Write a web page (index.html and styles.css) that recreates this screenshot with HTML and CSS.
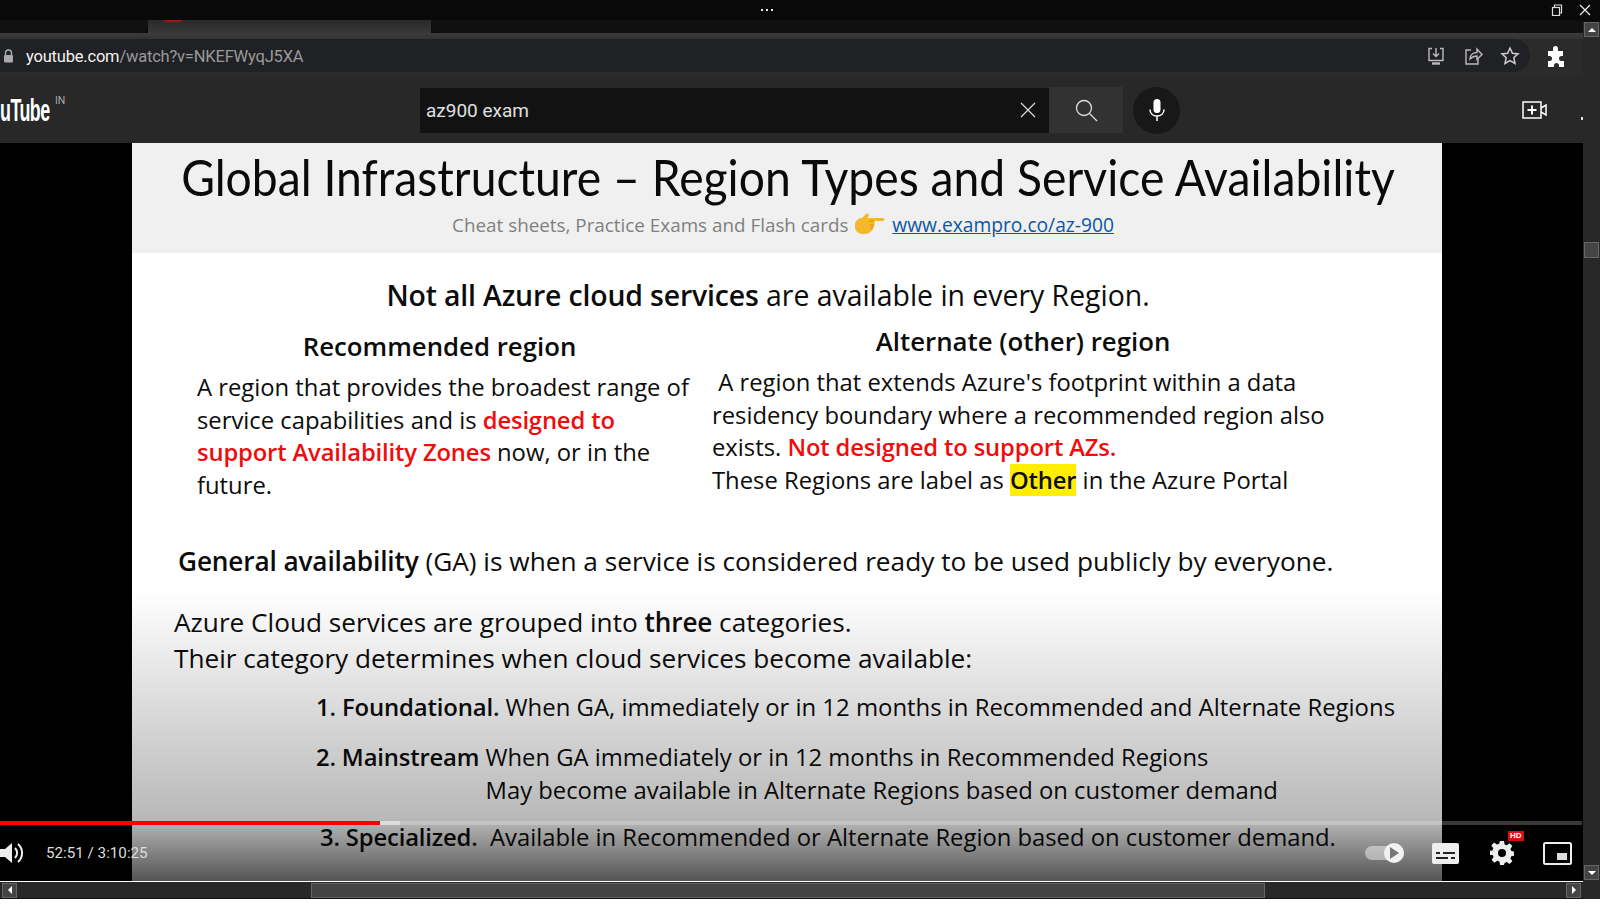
FILE: index.html
```html
<!DOCTYPE html>
<html lang="en">
<head>
    <meta charset="UTF-8">
    <meta name="viewport" content="width=device-width, initial-scale=1.0">
    <title>az900 exam - YouTube</title>
    <link rel="stylesheet" href="styles.css">
</head>
<body>
    <div class="window">
        <div class="main">
            <div class="titlebar">
                <svg class="dots" width="12" height="3" viewBox="0 0 12 3" fill="#eee"><rect width="2" height="2"/><rect x="5" width="2" height="2"/><rect x="10" width="2" height="2"/></svg>
                <div class="win-btns">
                    <svg width="12" height="12" viewBox="0 0 12 12" fill="none" stroke="#ddd" stroke-width="1.2"><rect x="1.5" y="3.5" width="7" height="8"/><path d="M3.5 3V1h7v8H9"/></svg>
                    <svg width="12" height="12" viewBox="0 0 12 12" fill="none" stroke="#eee" stroke-width="1.2"><path d="M1 1l10 10M11 1L1 11"/></svg>
                </div>
            </div>
            <div class="tabstrip">
                <div class="tab-left"></div>
                <div class="tab-active"><span class="favicon"></span></div>
                <div class="tab-right"></div>
            </div>
            <div class="toolbar">
                <div class="omnibox">
                    <svg class="lock" width="11" height="14" viewBox="0 0 11 14"><path d="M2.5 6V4a3 3 0 0 1 6 0v2" fill="none" stroke="#aaa" stroke-width="1.4"/><rect x="1" y="6" width="9" height="7.5" rx="1" fill="#aaa"/></svg>
                    <span class="url"><span class="host">youtube.com</span>/watch?v=NKEFWyqJ5XA</span>
                    <div class="omni-icons">
                        <svg width="20" height="20" viewBox="0 0 20 20" fill="none" stroke="#bbb" stroke-width="1.4"><path d="M6 2.5H3v12h14v-12h-3"/><path d="M10 2v8M7 7.5l3 3 3-3"/><path d="M6 17.5h8" stroke-width="2.4"/></svg>
                        <svg width="20" height="20" viewBox="0 0 20 20" fill="none" stroke="#bbb" stroke-width="1.4"><path d="M8 4H3v14h12v-5"/><path d="M7 13c0-4 3-6.500 7-6.500V3l5 5.500-5 5V10c-3 0-5 1-7 3z"/></svg>
                        <svg width="20" height="20" viewBox="0 0 20 20" fill="none" stroke="#ccc" stroke-width="1.5"><path d="M10 2l2.400 5.300 5.600.6-4.200 3.800 1.200 5.700-5-2.900-5 2.900 1.200-5.700L2 7.900l5.600-.6z"/></svg>
                    </div>
                </div>
                <svg class="puzzle" width="20" height="22" viewBox="0 0 20 22" fill="#fff"><path d="M7 2.500a2.500 2.500 0 0 1 5 0V5h5v5h-1.500a2.500 2.500 0 0 0 0 5H18v6h-5v-1.500a2.500 2.500 0 0 0-5 0V21H2v-6h1.500a2.500 2.500 0 0 0 0-5H2V5h5z"/></svg>
            </div>
            <div class="masthead">
                <div class="logo"><span class="logo-text">uTube</span><span class="logo-country">IN</span></div>
                <div class="search">
                    <div class="search-box">
                        <span class="query">az900 exam</span>
                        <svg width="18" height="18" viewBox="0 0 18 18" fill="none" stroke="#ddd" stroke-width="1.2"><path d="M2 2l14 14M16 2L2 16"/></svg>
                    </div>
                    <div class="search-btn">
                        <svg width="24" height="24" viewBox="0 0 24 24" fill="none" stroke="#ddd" stroke-width="1.3"><circle cx="10" cy="10" r="7.500"/><path d="M15.500 15.500L23 23"/></svg>
                    </div>
                    <div class="mic">
                        <svg width="18" height="24" viewBox="0 0 18 24"><rect x="5.500" y="1" width="7" height="14" rx="3.500" fill="#fff"/><path d="M2 11.500c0 4 3 6.500 7 6.500s7-2.500 7-6.500M9 18v5" fill="none" stroke="#fff" stroke-width="1.500"/></svg>
                    </div>
                </div>
                <svg class="create" width="26" height="18" viewBox="0 0 26 18" fill="none" stroke="#fff" stroke-width="1.500"><rect x="1" y="1" width="18" height="16"/><path d="M10 4.500v9M5.500 9h9" stroke-width="2"/><path d="M19 7l5-3v10l-5-3"/></svg>
                <span class="account-sliver"></span>
            </div>
            <div class="player">
                <div class="slide">
                    <div class="slide-head">
                        <h1>Global Infrastructure – Region Types and Service Availability</h1>
                        <p class="cheat">Cheat sheets, Practice Exams and Flash cards
                            <svg class="hand" width="32" height="22" viewBox="0 0 32 22"><path d="M1 11c1-4 4-6 7-6l4-4c2-1 3 0 3 2l-2 2h16c2 0 2 3 0 3H20c1 1 1 3 0 4 1 1 0 3-1 3 0 2-1 3-2 3-1 2-3 3-7 3-5 0-8-2-9-6z" fill="#f5b72d"/><path d="M20 8h-5M20 12h-4M19 15h-3" stroke="#d68f12" fill="none"/></svg>
                            <a href="#">www.exampro.co/az-900</a></p>
                    </div>
                    <p class="lead"><b>Not all Azure cloud services</b> are available in every Region.</p>
                    <div class="regions">
                        <div class="region-rec">
                            <h2>Recommended region</h2>
                            <p>A region that provides the broadest range of<br>service capabilities and is <b class="red">designed to</b><br><b class="red">support Availability Zones</b> now, or in the<br>future.</p>
                        </div>
                        <div class="region-alt">
                            <h2>Alternate (other) region</h2>
                            <p>&nbsp;A region that extends Azure's footprint within a data<br>residency boundary where a recommended region also<br>exists. <b class="red">Not designed to support AZs.</b><br>These Regions are label as <b class="mark">Other</b> in the Azure Portal</p>
                        </div>
                    </div>
                    <p class="ga"><b>General availability</b> (GA) is when a service is considered ready to be used publicly by everyone.</p>
                    <p class="groups">Azure Cloud services are grouped into <b>three</b> categories.<br>Their category determines when cloud services become available:</p>
                    <div class="cat cat-1"><b>1. Foundational.</b> When GA, immediately or in 12 months in Recommended and Alternate Regions</div>
                    <div class="cat cat-2"><b>2. Mainstream</b>&nbsp;<span>When GA immediately or in 12 months in Recommended Regions<br>May become available in Alternate Regions based on customer demand</span></div>
                    <div class="cat cat-3"><b>3. Specialized.</b>&nbsp; Available in Recommended or Alternate Region based on customer demand.</div>
                </div>
                <div class="shade"></div>
                <div class="controls">
                    <div class="progress"><span class="played"></span><span class="buffered"></span></div>
                    <div class="ctrl-row">
                        <svg class="vol" width="24" height="24" viewBox="0 0 24 24" fill="#eee"><path d="M0 8h5l7-6v20l-7-6H0z"/><path d="M15 7a7 7 0 0 1 0 10" fill="none" stroke="#eee" stroke-width="2"/><path d="M18 3a12 12 0 0 1 0 18" fill="none" stroke="#eee" stroke-width="2"/></svg>
                        <span class="time">52:51 / 3:10:25</span>
                        <div class="ctrl-right">
                            <div class="autoplay"><span class="knob"><svg width="10" height="12" viewBox="0 0 10 12"><path d="M1 0l9 6-9 6z" fill="#777"/></svg></span></div>
                            <svg class="cc" width="27" height="21" viewBox="0 0 27 21"><rect width="27" height="21" rx="2" fill="#eee"/><path d="M4 10h4M11 10h12M4 15h12M19 15h4" stroke="#222" stroke-width="2"/></svg>
                            <div class="gear">
                                <svg width="24" height="24" viewBox="0 0 24 24" fill="#eee"><path fill-rule="evenodd" d="M10 0h4l.6 3.400 2.200.9 2.800-2 2.800 2.800-2 2.800.9 2.200 3.400.6v4l-3.400.6-.9 2.200 2 2.800-2.800 2.800-2.800-2-2.200.9L14 24h-4l-.6-3.400-2.200-.9-2.800 2-2.800-2.800 2-2.800-.9-2.200L-1 14v-4l3.400-.6.9-2.200-2-2.800 2.800-2.800 2.800 2 2.200-.9zM12 8a4 4 0 1 0 0 8 4 4 0 0 0 0-8z"/></svg>
                                <span class="hd">HD</span>
                            </div>
                            <svg class="mini" width="29" height="23" viewBox="0 0 29 23" fill="none"><rect x="1" y="1" width="27" height="21" rx="1.500" stroke="#eee" stroke-width="2"/><rect x="14" y="11" width="10" height="7" fill="#ddd"/></svg>
                        </div>
                    </div>
                </div>
            </div>
        </div>
        <div class="vscroll">
            <div class="sb-btn"><span class="tri-up"></span></div>
            <div class="vtrack"><div class="vthumb"></div></div>
            <div class="sb-btn"><span class="tri-down"></span></div>
        </div>
    </div>
    <div class="hscroll">
        <div class="sb-btn sb-left"><span class="tri-left"></span></div>
        <div class="hthumb"></div>
        <div class="sb-btn sb-right"><span class="tri-right"></span></div>
    </div>
</body>
</html>
```

FILE: styles.css
```css
html, body {
    margin: 0;
    height: 914px;
    overflow: hidden;
    background-color: #fff;
    font-family: "Open Sans", sans-serif;
}
p, h1, h2 {
    margin: 0;
    font-weight: normal;
}
b {
    font-weight: 600;
    letter-spacing: -0.15px;
}
.window {
    display: flex;
    height: 881px;
}
.main {
    width: 1583px;
    display: flex;
    flex-direction: column;
}

/* browser chrome */
.titlebar {
    height: 20px;
    background-color: #090909;
    position: relative;
}
.dots {
    position: absolute;
    left: 761px;
    top: 9px;
}
.win-btns {
    position: absolute;
    right: -8px;
    top: 4px;
    display: flex;
    gap: 16px;
}
.tabstrip {
    height: 13px;
    background-color: #0c0c0c;
    display: flex;
}
.tab-left {
    width: 148px;
    background-color: #111;
    border-bottom-right-radius: 8px;
}
.tab-active {
    width: 283px;
    background: linear-gradient(#2a2a2a, #383838);
}
.favicon {
    display: block;
    width: 18px;
    height: 2px;
    margin-left: 16px;
    background-color: #a01515;
    border-radius: 0 0 8px 8px;
}
.tab-right {
    flex: 1;
    background-color: #101010;
    border-bottom-left-radius: 8px;
}
.toolbar {
    height: 44px;
    box-sizing: border-box;
    padding-top: 6px;
    background: linear-gradient(#3c3c3c, #333 6px, #2b2b2b 6px);
    display: flex;
    position: relative;
}
.omnibox {
    width: 1530px;
    height: 33px;
    background-color: #202124;
    border-radius: 0 17px 17px 0;
    display: flex;
    align-items: center;
    box-sizing: border-box;
    padding: 0 10px 0 3px;
}
.lock {
    flex: none;
}
.url {
    margin-left: 12px;
    padding-top: 2px;
    color: #9a9a9a;
    font-family: Roboto, sans-serif;
    font-size: 16.500px;
    letter-spacing: -0.2px;
}
.host {
    color: #f2f2f2;
}
.omni-icons {
    margin-left: auto;
    display: flex;
    gap: 17px;
}
.puzzle {
    position: absolute;
    left: 1546px;
    top: 13px;
}
.masthead {
    height: 66px;
    background-color: #282828;
    display: flex;
    align-items: center;
    position: relative;
}
.logo {
    width: 420px;
    display: flex;
    color: #fff;
}
.logo-text {
    width: 50px;
    font-family: "Liberation Sans", sans-serif;
    font-size: 32px;
    font-weight: bold;
    line-height: 36px;
    letter-spacing: -1px;
    transform: scaleX(0.56);
    transform-origin: left center;
}
.logo-country {
    font-family: Roboto, sans-serif;
    font-size: 10.500px;
    color: #aaa;
    margin: 2px 0 0 5px;
}
.search {
    display: flex;
    align-items: center;
}
.search-box {
    width: 629px;
    height: 45px;
    box-sizing: border-box;
    padding: 0 12px 0 6px;
    background-color: #121212;
    display: flex;
    align-items: center;
    justify-content: space-between;
}
.query {
    color: #e0e0e0;
    font-family: Roboto, sans-serif;
    font-size: 19px;
}
.search-btn {
    width: 74px;
    height: 46px;
    background-color: #323232;
    display: flex;
    align-items: center;
    justify-content: center;
}
.mic {
    width: 47px;
    height: 47px;
    margin-left: 10px;
    border-radius: 50%;
    background-color: #181818;
    display: flex;
    align-items: center;
    justify-content: center;
}
.create {
    margin-left: 342px;
}
.account-sliver {
    position: absolute;
    right: 0;
    top: 40px;
    width: 2px;
    height: 3px;
    background-color: #ddd;
}

/* player and slide */
.player {
    flex: 1;
    position: relative;
    background-color: #000;
    overflow: hidden;
}
.slide {
    width: 1310px;
    height: 738px;
    margin-left: 132px;
    background-color: #fff;
    color: #0c0c0c;
    font-size: 23.800px;
    white-space: nowrap;
    overflow: hidden;
}
.slide-head {
    height: 110px;
    background-color: #f0f0f0;
    text-align: center;
}
.slide-head h1 {
    font-family: Lato, sans-serif;
    font-size: 50px;
    line-height: 58px;
    padding-top: 5px;
    color: #0a0a0a;
    transform: scaleX(0.925);
}
.cheat {
    font-size: 18.850px;
    line-height: 28px;
    margin-top: 5px;
    padding-right: 8px;
    color: #808080;
}
.hand {
    vertical-align: -3px;
    margin: 0 1px;
}
.cheat a {
    font-size: 19.200px;
    color: #0b57a4;
}
.lead {
    margin-top: 24px;
    padding-right: 38px;
    font-size: 28.400px;
    line-height: 36px;
    text-align: center;
}
.regions {
    display: flex;
    margin-top: 16px;
    height: 173px;
}
.region-rec {
    width: 580px;
    padding-left: 65px;
    box-sizing: border-box;
}
.region-alt {
    margin-top: -5px;
}
.regions h2 {
    font-size: 25.800px;
    font-weight: 600;
    line-height: 34px;
    text-align: center;
    margin-bottom: 8px;
}
.region-rec h2 {
    width: 485px;
}
.region-alt h2 {
    width: 622px;
}
.regions p {
    line-height: 32.600px;
}
.red {
    color: #f00c0c;
}
.mark {
    background-color: #ffee00;
}
.ga {
    margin: 41px 0 0 46px;
    font-size: 26.240px;
    line-height: 36px;
}
.groups {
    margin: 25px 0 0 42px;
    font-size: 26.200px;
    line-height: 36px;
}
.cat {
    display: flex;
    white-space: pre;
    line-height: 34px;
    margin-left: 184px;
}
.cat-1 {
    margin-top: 14px;
    font-size: 23.900px;
}
.cat-2 {
    margin-top: 17px;
    line-height: 32.500px;
}
.cat-3 {
    margin-top: 14px;
    margin-left: 188px;
}

/* player controls, sit over the video */
.shade {
    position: absolute;
    left: 0;
    right: 0;
    bottom: 0;
    height: 291px;
    background: linear-gradient(rgba(0, 0, 0, 0), rgba(0, 0, 0, 0.28) 79%, rgba(0, 0, 0, 0.67));
}
.controls {
    position: absolute;
    left: 0;
    right: 0;
    bottom: 0;
}
.progress {
    height: 4px;
    margin-right: 1px;
    background-color: rgba(255, 255, 255, 0.22);
    display: flex;
}
.played {
    width: 380px;
    background-color: #f00;
}
.buffered {
    width: 20px;
    background-color: #ddd;
}
.ctrl-row {
    height: 56px;
    display: flex;
    align-items: center;
}
.time {
    margin-left: 22px;
    color: #ddd;
    font-family: Roboto, sans-serif;
    font-size: 15.200px;
}
.ctrl-right {
    margin-left: auto;
    display: flex;
    align-items: center;
    padding-right: 11px;
}
.autoplay {
    width: 28px;
    height: 14px;
    border-radius: 7px;
    background-color: rgba(255, 255, 255, 0.45);
    position: relative;
    margin-right: 28px;
    padding-right: 11px;
}
.knob {
    position: absolute;
    right: 0;
    top: -3px;
    width: 20px;
    height: 20px;
    border-radius: 50%;
    background-color: #f2f2f2;
    display: flex;
    align-items: center;
    justify-content: center;
}
.gear {
    position: relative;
    margin-left: 31px;
    height: 24px;
}
.hd {
    position: absolute;
    left: 18px;
    top: -10px;
    padding: 0 2px;
    background-color: #d80f0f;
    color: #fff;
    font-family: "Liberation Sans", sans-serif;
    font-size: 8px;
    font-weight: bold;
    line-height: 10px;
    border-radius: 1px;
}
.mini {
    margin-left: 29px;
}

/* scrollbars */
.vscroll {
    width: 17px;
    height: 899px;
    background: linear-gradient(#090909 22px, #282828 22px);
    display: flex;
    flex-direction: column;
    align-items: center;
    box-sizing: border-box;
    padding: 22px 0 19px;
}
.vtrack {
    flex: 1;
    width: 15px;
    padding-top: 205px;
}
.vthumb {
    height: 16px;
    background-color: #444;
    border: 1px solid #666;
    box-sizing: border-box;
}
.hscroll {
    height: 18px;
    width: 1583px;
    background-color: #282828;
    border-top: 1px solid #fff;
    border-bottom: 1px solid #111;
    box-sizing: border-box;
    display: flex;
    align-items: center;
}
.sb-btn {
    width: 15px;
    height: 15px;
    background-color: #444;
    border: 1px solid #666;
    box-sizing: border-box;
    display: flex;
    align-items: center;
    justify-content: center;
    flex: none;
}
.sb-left {
    margin-left: 2px;
}
.hthumb {
    margin-left: 294px;
    width: 954px;
    height: 15px;
    background-color: #444;
    border: 1px solid #666;
    box-sizing: border-box;
}
.sb-right {
    margin-left: auto;
    margin-right: 2px;
}
.tri-up, .tri-down, .tri-left, .tri-right {
    width: 0;
    height: 0;
    border: 4px solid transparent;
}
.tri-up {
    border-bottom-color: #fff;
    border-top-width: 0;
}
.tri-down {
    border-top-color: #fff;
    border-bottom-width: 0;
}
.tri-left {
    border-right-color: #fff;
    border-left-width: 0;
}
.tri-right {
    border-left-color: #fff;
    border-right-width: 0;
}
```
